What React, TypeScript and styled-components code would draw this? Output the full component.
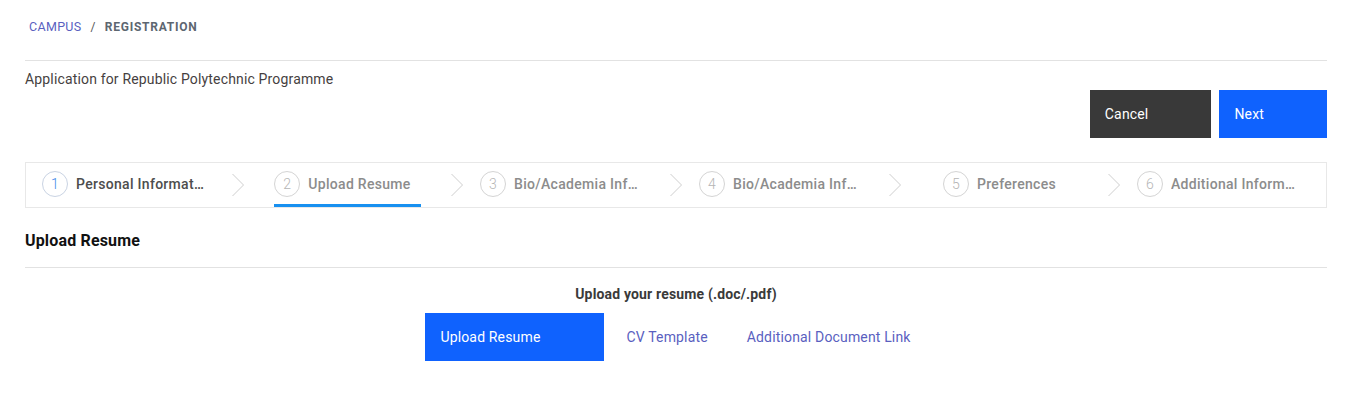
import React from 'react';
import styled, { createGlobalStyle } from 'styled-components';

const GlobalStyle = createGlobalStyle`
    html, body {
        margin: 0;
        padding: 0;
        background: #ffffff;
    }

    body {
        font-family: Roboto, "Liberation Sans", Arial, sans-serif;
        color: #333;
        letter-spacing: 0.16px;
    }

    * {
        box-sizing: border-box;
    }
`;

const Page = styled.div`
    padding: 0 22px 0 25px;
`;

const Breadcrumb = styled.nav`
    display: flex;
    align-items: flex-end;
    height: 61px;
    padding: 0 4px 25px;
    border-bottom: 1px solid #e2e2e2;
    font-size: 12px;
    line-height: 16px;
    letter-spacing: 0.32px;
`;

const Crumb = styled.a`
    color: #5a5fbf;
    text-decoration: none;
    font-size: 12.5px;
`;

const Separator = styled.span`
    margin: 0 9px;
    color: #555;
`;

const CurrentCrumb = styled.span`
    color: #5d6670;
    font-weight: 700;
    letter-spacing: 0.75px;
`;

const Header = styled.header`
    display: flex;
    flex-direction: column;
    padding-top: 8px;
`;

const Title = styled.h1`
    margin: 0;
    font-size: 14px;
    font-weight: 400;
    line-height: 20px;
    color: #463f3f;
`;

const ButtonRow = styled.div<{ align?: string }>`
    display: flex;
    gap: 8px;
    justify-content: ${props => props.align || 'flex-end'};
    margin-top: 1px;
`;

const Button = styled.button<{ kind: 'primary' | 'secondary' | 'ghost' }>`
    display: flex;
    align-items: center;
    height: 48px;
    padding: ${props => (props.kind === 'ghost' ? '0 16px 0 15px' : '0 63px 0 15px')};
    border: none;
    border-radius: 0;
    font-family: Roboto, "Liberation Sans", Arial, sans-serif;
    font-size: 14px;
    letter-spacing: 0.16px;
    cursor: pointer;
    color: ${props => (props.kind === 'ghost' ? '#5a5fbf' : '#ffffff')};
    background: ${props =>
        props.kind === 'primary' ? '#0f62fe' : props.kind === 'secondary' ? '#393939' : 'transparent'};
`;

const Steps = styled.div`
    display: flex;
    align-items: center;
    height: 46px;
    margin-top: 24px;
    border: 1px solid #e8e8e8;
`;

const StepSlot = styled.div`
    flex: 1;
    display: flex;
    justify-content: center;
    height: 100%;
`;

const StepItem = styled.div<{ active?: boolean }>`
    display: flex;
    align-items: center;
    gap: 8px;
    height: 100%;
    padding: 1px 10px 0 0;
    border-bottom: 3px solid ${props => (props.active ? '#1890f0' : 'transparent')};
`;

const StepNumber = styled.span<{ current?: boolean }>`
    display: flex;
    align-items: center;
    justify-content: center;
    width: 26px;
    height: 26px;
    border-radius: 50%;
    border: 1px solid ${props => (props.current ? '#c9d3e3' : '#d4d4d4')};
    color: ${props => (props.current ? '#3f8ae8' : '#b5b5b5')};
    font-size: 14px;
    font-weight: 300;
`;

const StepLabel = styled.span<{ current?: boolean }>`
    max-width: 129px;
    white-space: nowrap;
    overflow: hidden;
    text-overflow: ellipsis;
    font-size: 14px;
    font-weight: 500;
    letter-spacing: 0.3px;
    color: ${props => (props.current ? '#4d4d4d' : '#8c8c8c')};
`;

const Chevron = styled.svg`
    flex: 0 0 14px;
    width: 14px;
    height: 24px;
`;

const Section = styled.section`
    margin-top: 22px;
`;

const SectionTitle = styled.h2`
    margin: 0;
    padding-bottom: 15px;
    border-bottom: 1px solid #e2e2e2;
    font-size: 16px;
    font-weight: 700;
    line-height: 22px;
    color: #111;
`;

const UploadBlock = styled.div`
    display: flex;
    flex-direction: column;
    align-items: center;
    padding-top: 16px;
`;

const Prompt = styled.p`
    margin: 0 0 8px;
    font-size: 14px;
    font-weight: 700;
    line-height: 20px;
    color: #3a3a3a;
`;

const steps = [
    'Personal Information',
    'Upload Resume',
    'Bio/Academia Information',
    'Bio/Academia Information',
    'Preferences',
    'Additional Information'
];

const StepChevron = () => (
    <Chevron viewBox="0 0 14 24">
        <polyline points="1.5,1 12.5,12 1.5,23" fill="none" stroke="#cfcfcf" strokeWidth="1" />
    </Chevron>
);

export default function App() {
    return (
        <Page>
            <GlobalStyle />
            <Breadcrumb>
                <Crumb href="#">CAMPUS</Crumb>
                <Separator>/</Separator>
                <CurrentCrumb>REGISTRATION</CurrentCrumb>
            </Breadcrumb>

            <Header>
                <Title>Application for Republic Polytechnic Programme</Title>
                <ButtonRow>
                    <Button kind="secondary">Cancel</Button>
                    <Button kind="primary">Next</Button>
                </ButtonRow>
            </Header>

            <Steps>
                {steps.map((label, i) => (
                    <React.Fragment key={i}>
                        {i > 0 && <StepChevron />}
                        <StepSlot>
                            <StepItem active={i === 1}>
                                <StepNumber current={i === 0}>{i + 1}</StepNumber>
                                <StepLabel current={i === 0}>{label}</StepLabel>
                            </StepItem>
                        </StepSlot>
                    </React.Fragment>
                ))}
            </Steps>

            <Section>
                <SectionTitle>Upload Resume</SectionTitle>
                <UploadBlock>
                    <Prompt>Upload your resume (.doc/.pdf)</Prompt>
                    <ButtonRow align="center">
                        <Button kind="primary">Upload Resume</Button>
                        <Button kind="ghost">CV Template</Button>
                        <Button kind="ghost">Additional Document Link</Button>
                    </ButtonRow>
                </UploadBlock>
            </Section>
        </Page>
    );
}
